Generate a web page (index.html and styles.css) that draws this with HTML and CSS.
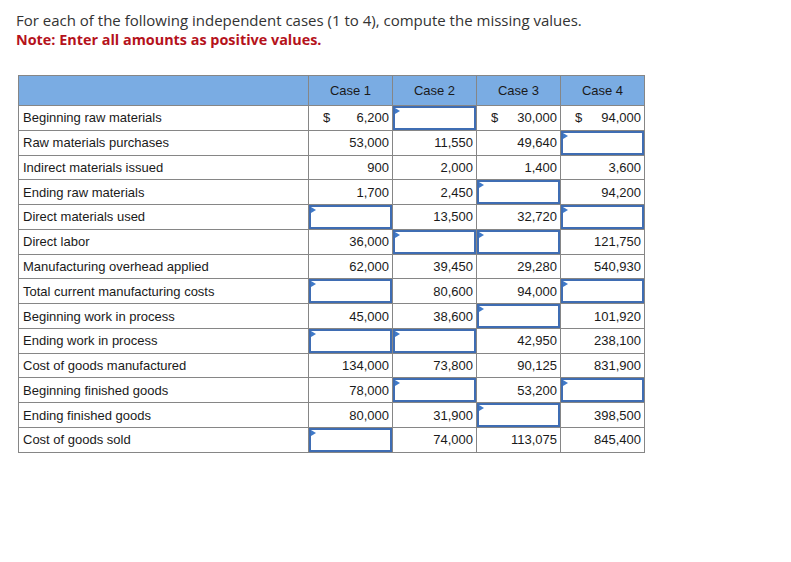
FILE: index.html
```html
<!DOCTYPE html>
<html>
<head>
<meta charset="utf-8">
<link rel="stylesheet" href="styles.css">
</head>
<body>
<div class="intro">
  <p class="q">For each of the following independent cases (1 to 4), compute the missing values.</p>
  <p class="note">Note: Enter all amounts as positive values.</p>
</div>
<table class="grid">
  <colgroup>
    <col class="c-lbl"><col class="c-case"><col class="c-case"><col class="c-case"><col class="c-case">
  </colgroup>
  <tr class="head">
    <th class="lbl"></th><th>Case 1</th><th>Case 2</th><th>Case 3</th><th>Case 4</th>
  </tr>
  <tr>
    <td class="lbl">Beginning raw materials</td>
    <td><span class="cur">$</span><span class="v">6,200</span></td>
    <td class="in"><div class="box"></div></td>
    <td><span class="cur">$</span><span class="v">30,000</span></td>
    <td><span class="cur">$</span><span class="v">94,000</span></td>
  </tr>
  <tr>
    <td class="lbl">Raw materials purchases</td>
    <td><span class="v">53,000</span></td>
    <td><span class="v">11,550</span></td>
    <td><span class="v">49,640</span></td>
    <td class="in"><div class="box"></div></td>
  </tr>
  <tr>
    <td class="lbl">Indirect materials issued</td>
    <td><span class="v">900</span></td>
    <td><span class="v">2,000</span></td>
    <td><span class="v">1,400</span></td>
    <td><span class="v">3,600</span></td>
  </tr>
  <tr>
    <td class="lbl">Ending raw materials</td>
    <td><span class="v">1,700</span></td>
    <td><span class="v">2,450</span></td>
    <td class="in"><div class="box"></div></td>
    <td><span class="v">94,200</span></td>
  </tr>
  <tr>
    <td class="lbl">Direct materials used</td>
    <td class="in"><div class="box"></div></td>
    <td><span class="v">13,500</span></td>
    <td><span class="v">32,720</span></td>
    <td class="in"><div class="box"></div></td>
  </tr>
  <tr>
    <td class="lbl">Direct labor</td>
    <td><span class="v">36,000</span></td>
    <td class="in"><div class="box"></div></td>
    <td class="in"><div class="box"></div></td>
    <td><span class="v">121,750</span></td>
  </tr>
  <tr>
    <td class="lbl">Manufacturing overhead applied</td>
    <td><span class="v">62,000</span></td>
    <td><span class="v">39,450</span></td>
    <td><span class="v">29,280</span></td>
    <td><span class="v">540,930</span></td>
  </tr>
  <tr>
    <td class="lbl">Total current manufacturing costs</td>
    <td class="in"><div class="box"></div></td>
    <td><span class="v">80,600</span></td>
    <td><span class="v">94,000</span></td>
    <td class="in"><div class="box"></div></td>
  </tr>
  <tr>
    <td class="lbl">Beginning work in process</td>
    <td><span class="v">45,000</span></td>
    <td><span class="v">38,600</span></td>
    <td class="in"><div class="box"></div></td>
    <td><span class="v">101,920</span></td>
  </tr>
  <tr>
    <td class="lbl">Ending work in process</td>
    <td class="in"><div class="box"></div></td>
    <td class="in"><div class="box"></div></td>
    <td><span class="v">42,950</span></td>
    <td><span class="v">238,100</span></td>
  </tr>
  <tr>
    <td class="lbl">Cost of goods manufactured</td>
    <td><span class="v">134,000</span></td>
    <td><span class="v">73,800</span></td>
    <td><span class="v">90,125</span></td>
    <td><span class="v">831,900</span></td>
  </tr>
  <tr>
    <td class="lbl">Beginning finished goods</td>
    <td><span class="v">78,000</span></td>
    <td class="in"><div class="box"></div></td>
    <td><span class="v">53,200</span></td>
    <td class="in"><div class="box"></div></td>
  </tr>
  <tr>
    <td class="lbl">Ending finished goods</td>
    <td><span class="v">80,000</span></td>
    <td><span class="v">31,900</span></td>
    <td class="in"><div class="box"></div></td>
    <td><span class="v">398,500</span></td>
  </tr>
  <tr>
    <td class="lbl">Cost of goods sold</td>
    <td class="in"><div class="box"></div></td>
    <td><span class="v">74,000</span></td>
    <td><span class="v">113,075</span></td>
    <td><span class="v">845,400</span></td>
  </tr>
</table>
</body>
</html>
```

FILE: styles.css
```css
body {
  margin: 0;
  background: #ffffff;
  font-family: "Liberation Sans", Arial, sans-serif;
  color: #222;
}
.intro {
  padding: 11px 0 0 16px;
  font-family: "Open Sans", "Liberation Sans", sans-serif;
  line-height: 19px;
}
.intro p {
  margin: 0;
}
.q {
  color: #333;
  font-size: 15px;
}
.note {
  color: #b5121b;
  font-weight: bold;
  font-size: 14.4px;
}
.grid {
  margin: 26px 0 0 18px;
  border-collapse: collapse;
  table-layout: fixed;
  width: 626px;
  font-size: 13px;
}
.c-lbl {
  width: 290px;
}
.c-case {
  width: 84px;
}
.grid th, .grid td {
  border: 1px solid #868686;
  padding: 0;
  height: 23.77px;
  position: relative;
}
.grid .lbl {
  text-align: left;
  padding-left: 4px;
}
.head th {
  background: #7aace3;
  font-weight: normal;
  height: 29px;
  text-align: center;
  color: #1a1a1a;
}
.grid td {
  text-align: right;
  color: #1a1a1a;
}
.grid td .v {
  padding-right: 3px;
}
.cur {
  float: left;
  padding-left: 14px;
}
.grid td.in {
  padding: 0;
  vertical-align: top;
}
.box {
  height: 23.77px;
  box-sizing: border-box;
  border: 2px solid #3f6db3;
  position: relative;
}
.box::before {
  content: "";
  position: absolute;
  left: 0;
  top: 0;
  border-left: 5px solid #3f79c8;
  border-top: 3px solid transparent;
  border-bottom: 3px solid transparent;
}
```
